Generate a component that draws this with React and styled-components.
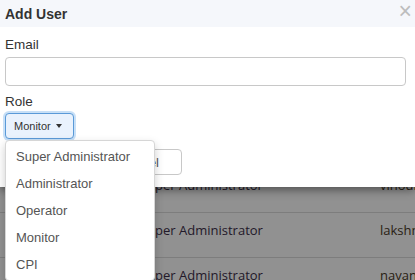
import React from "react";
import styled, { createGlobalStyle } from "styled-components";

const GlobalStyle = createGlobalStyle`
  html, body {
    margin: 0;
    padding: 0;
    width: 415px;
    height: 280px;
    overflow: hidden;
    font-family: "Liberation Sans", Arial, sans-serif;
    background: #fff;
  }
`;

const rows = [
  { role: "Super Administrator", email: "vinodkumar@example.com" },
  { role: "Super Administrator", email: "lakshmi@example.com" },
  { role: "Super Administrator", email: "navaneeth@example.com" },
];

const roles = ["Super Administrator", "Administrator", "Operator", "Monitor", "CPI"];

function App() {
  return (
    <Page>
      <GlobalStyle />
      <Table>
        <Spacer />
        {rows.map((r, i) => (
          <Row key={i}>
            <RoleCell>{r.role}</RoleCell>
            <EmailCell>{r.email}</EmailCell>
          </Row>
        ))}
      </Table>
      <Backdrop />
      <Modal>
        <Header>
          <Title>Add User</Title>
          <Close>×</Close>
        </Header>
        <Body>
          <Label>Email</Label>
          <Input type="text" />
          <Label>Role</Label>
          <SelectWrap>
            <SelectButton>
              Monitor <Caret />
            </SelectButton>
            <Menu>
              {roles.map((r) => (
                <MenuItem key={r}>{r}</MenuItem>
              ))}
            </Menu>
          </SelectWrap>
        </Body>
        <Footer>
          <Button>Cancel</Button>
        </Footer>
      </Modal>
    </Page>
  );
}

export default App;

const Page = styled.div`
  position: relative;
  width: 415px;
  height: 280px;
  overflow: hidden;
`;

const Table = styled.div`
  display: flex;
  flex-direction: column;
  font-family: "Open Sans", sans-serif;
  font-size: 13px;
  color: #3d2f4a;
`;

const Spacer = styled.div`
  height: 168px;
`;

const Row = styled.div`
  display: flex;
  align-items: center;
  box-sizing: border-box;
  height: 45px;
  padding-bottom: 10px;
  border-bottom: 1px solid #dcdcdc;
`;

const RoleCell = styled.div`
  flex: none;
  width: 240px;
  padding-left: 140px;
  white-space: nowrap;
`;

const EmailCell = styled.div`
  white-space: nowrap;
  color: #4a3a28;
`;

const Backdrop = styled.div`
  position: absolute;
  inset: 0;
  background: rgba(0, 0, 0, 0.43);
`;

const Modal = styled.div`
  position: absolute;
  top: 0;
  left: 0;
  right: 0;
  height: 187px;
  background: #fff;
  box-shadow: 0 3px 9px rgba(0, 0, 0, 0.45);
`;

const Header = styled.div`
  display: flex;
  align-items: center;
  justify-content: space-between;
  height: 27px;
  padding: 0 5px;
  background: #f5f7fb;
`;

const Title = styled.div`
  font-size: 14px;
  font-weight: bold;
  color: #333;
`;

const Close = styled.div`
  font-size: 23px;
  line-height: 1;
  color: #bdbdbd;
  margin-top: -4px;
  margin-right: -2px;
`;

const Body = styled.div`
  display: flex;
  flex-direction: column;
  align-items: flex-start;
  padding: 10px 5px 0;
`;

const Label = styled.div`
  font-size: 13.5px;
  color: #333;
  margin-bottom: 4px;
`;

const Input = styled.input`
  box-sizing: border-box;
  width: 401px;
  height: 29px;
  margin: 1px 0 8px;
  border: 1px solid #c8c8c8;
  border-radius: 4px;
`;

const SelectWrap = styled.div`
  position: relative;
`;

const SelectButton = styled.div`
  box-sizing: border-box;
  display: flex;
  align-items: center;
  gap: 5px;
  width: 69px;
  height: 26px;
  padding: 0 8px;
  font-size: 11px;
  color: #333;
  background: #e9f2fd;
  border: 1px solid #5a9ad8;
  border-radius: 4px;
  box-shadow: 0 0 0 2px #c8e0f7;
`;

const Caret = styled.span`
  width: 0;
  height: 0;
  border-left: 3.5px solid transparent;
  border-right: 3.5px solid transparent;
  border-top: 4px solid #333;
`;

const Menu = styled.div`
  position: absolute;
  top: 27px;
  left: 0;
  width: 148px;
  padding: 2px 0;
  background: #fff;
  border: 1px solid #d6d6d6;
  border-radius: 4px;
  box-shadow: 0 4px 10px rgba(0, 0, 0, 0.2);
  z-index: 2;
`;

const MenuItem = styled.div`
  height: 27px;
  line-height: 27px;
  padding-left: 10px;
  font-size: 13px;
  color: #555;
  white-space: nowrap;
`;

const Footer = styled.div`
  display: flex;
  padding: 10px 0 0 117px;
`;

const Button = styled.div`
  box-sizing: border-box;
  display: flex;
  align-items: center;
  justify-content: flex-end;
  width: 65px;
  height: 26px;
  padding-right: 22px;
  font-size: 13px;
  color: #555;
  border: 1px solid #c8c8c8;
  border-radius: 4px;
`;
